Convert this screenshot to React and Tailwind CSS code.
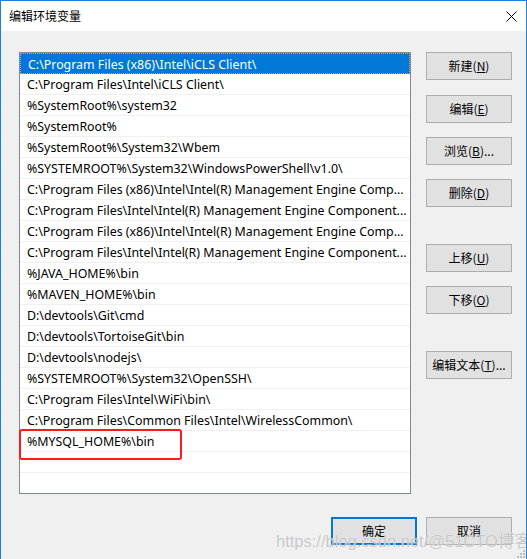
import React from "react";

const rows = [
  "C:\\Program Files (x86)\\Intel\\iCLS Client\\",
  "C:\\Program Files\\Intel\\iCLS Client\\",
  "%SystemRoot%\\system32",
  "%SystemRoot%",
  "%SystemRoot%\\System32\\Wbem",
  "%SYSTEMROOT%\\System32\\WindowsPowerShell\\v1.0\\",
  "C:\\Program Files (x86)\\Intel\\Intel(R) Management Engine Comp...",
  "C:\\Program Files\\Intel\\Intel(R) Management Engine Component...",
  "C:\\Program Files (x86)\\Intel\\Intel(R) Management Engine Comp...",
  "C:\\Program Files\\Intel\\Intel(R) Management Engine Component...",
  "%JAVA_HOME%\\bin",
  "%MAVEN_HOME%\\bin",
  "D:\\devtools\\Git\\cmd",
  "D:\\devtools\\TortoiseGit\\bin",
  "D:\\devtools\\nodejs\\",
  "%SYSTEMROOT%\\System32\\OpenSSH\\",
  "C:\\Program Files\\Intel\\WiFi\\bin\\",
  "C:\\Program Files\\Common Files\\Intel\\WirelessCommon\\",
  "%MYSQL_HOME%\\bin",
  "",
  "",
];

const font = { fontFamily: '"Noto Sans", "Noto Sans CJK SC", sans-serif' };

function Btn({ children, className = "", primary = false }) {
  return (
    <div
      className={
        "w-[86px] h-[28px] flex items-center justify-center bg-[#e1e1e1] text-[12px] text-black leading-none " +
        (primary ? "border-2 border-[#0078d7] " : "border border-[#adadad] ") +
        className
      }
    >
      <span className="font-['Noto_Sans_CJK_SC',sans-serif]">{children}</span>
    </div>
  );
}

export default function App() {
  return (
    <div className="relative w-[527px] h-[559px] overflow-hidden bg-[#f0f0f0] border-x border-t border-[#1883d7] font-['Noto_Sans_CJK_SC',sans-serif]">
      {/* title bar */}
      <div className="h-[30px] bg-white flex items-center justify-between pl-[8px] pr-[9px]">
        <span className="text-[12px] text-black leading-none">编辑环境变量</span>
        <svg width="11" height="11" viewBox="0 0 11 11">
          <path d="M0.5 0.5 L10.5 10.5 M10.5 0.5 L0.5 10.5" stroke="#000" strokeWidth="1" />
        </svg>
      </div>

      {/* body */}
      <div className="pl-[18px] pt-[21px]">
        <div className="flex">
          <div className="w-[392px] h-[442px] border border-[#828790] bg-white overflow-hidden">
            {rows.map((r, i) => (
              <div
                key={i}
                className={
                  "h-[21px] flex items-center pt-[3px] pl-[7px] text-[12.4px] leading-none whitespace-nowrap overflow-hidden " +
                  (i === 0
                    ? "bg-[#0078d7] text-white border border-dotted border-[#f5a030] pl-[6px]"
                    : "text-black border-b border-[#f0f0f0]")
                }
                style={font}
              >
                {r}
              </div>
            ))}
          </div>
          <div className="ml-[15px] flex flex-col">
            <Btn>新建(<u>N</u>)</Btn>
            <Btn className="mt-[15px]">编辑(<u>E</u>)</Btn>
            <Btn className="mt-[14px]">浏览(<u>B</u>)...</Btn>
            <Btn className="mt-[14px]">删除(<u>D</u>)</Btn>
            <Btn className="mt-[37px]">上移(<u>U</u>)</Btn>
            <Btn className="mt-[14px]">下移(<u>O</u>)</Btn>
            <Btn className="mt-[37px]">编辑文本(<u>T</u>)...</Btn>
          </div>
        </div>
        <div className="flex justify-end gap-[9px] pr-[14px] mt-[23px]">
          <Btn primary>确定</Btn>
          <Btn>取消</Btn>
        </div>
      </div>

      {/* red annotation box */}
      <div className="absolute left-[18px] top-[428px] w-[163px] h-[31px] border-2 border-[#ff1a1a] rounded-[3px] pointer-events-none" />

      {/* watermark */}
      <div
        className="absolute left-[275px] top-[532px] text-[16.5px] leading-none text-[#c4c4c4] opacity-90 pointer-events-none whitespace-nowrap"
        style={{ fontFamily: '"Liberation Sans", "Noto Sans CJK SC", sans-serif', textShadow: "0 0 1px #fff" }}
      >
        https://blog.csdn.net/@51CTO博客
      </div>

      {/* resize grip */}
      <svg className="absolute right-[1px] bottom-[1px]" width="8" height="8" viewBox="0 0 8 8">
        <rect x="6" y="0" width="2" height="2" fill="#bcbcbc" />
        <rect x="3" y="3" width="2" height="2" fill="#bcbcbc" />
        <rect x="6" y="3" width="2" height="2" fill="#bcbcbc" />
        <rect x="0" y="6" width="2" height="2" fill="#bcbcbc" />
        <rect x="3" y="6" width="2" height="2" fill="#bcbcbc" />
        <rect x="6" y="6" width="2" height="2" fill="#bcbcbc" />
      </svg>
    </div>
  );
}
